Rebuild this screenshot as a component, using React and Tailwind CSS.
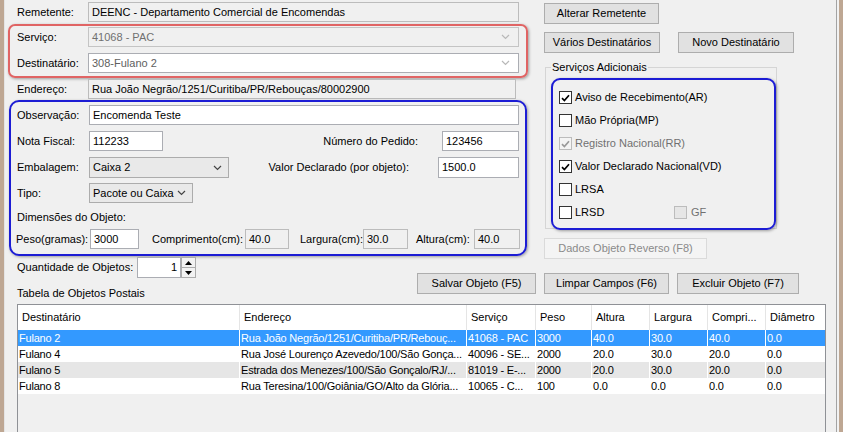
import React from 'react';

function Chevron({ color }) {
  return (
    <svg width="9" height="6" viewBox="0 0 9 6" className="shrink-0">
      <path d="M1 1 L4.5 4.5 L8 1" fill="none" stroke={color} strokeWidth="1.2" />
    </svg>
  );
}

function TextBox({ className, children, disabled, right }) {
  return (
    <div
      className={`${className} shrink-0 h-full border flex items-center px-[3px] whitespace-nowrap overflow-hidden ${
        disabled ? 'bg-[#f0f0f0] border-[#bcbcbc]' : 'bg-white border-[#abadb3]'
      } ${right ? 'justify-end' : ''}`}
    >
      {children}
    </div>
  );
}

function Combo({ className, children, variant }) {
  const styles = {
    disabled: 'bg-[#f0f0f0] border-[#c4c4c4] text-[#707070] pr-[8px]',
    editable: 'bg-white border-[#abadb3] text-[#606060] pr-[8px]',
    button: 'bg-[#e9e9e9] border-[#acacac] text-black pr-[6px]',
  };
  return (
    <div className={`${className} ${styles[variant]} shrink-0 h-full border flex items-center justify-between pl-[3px] whitespace-nowrap`}>
      <span>{children}</span>
      <Chevron color={variant === 'button' ? '#444' : '#b8b8b8'} />
    </div>
  );
}

function Btn({ className, children, disabled }) {
  return (
    <div
      className={`${className} shrink-0 h-[21px] border flex items-center justify-center whitespace-nowrap ${
        disabled ? 'bg-[#f4f4f4] border-[#dadada] text-[#8a8a8a]' : 'bg-[#e1e1e1] border-[#adadad]'
      }`}
    >
      {children}
    </div>
  );
}

function Check({ checked, disabled, dim }) {
  return (
    <div
      className={`w-[13px] h-[13px] shrink-0 border flex items-center justify-center ${
        dim ? 'border-[#bcbcbc] bg-[#e6e6e6]' : disabled ? 'border-[#bcbcbc] bg-[#f4f4f4]' : 'border-[#333333] bg-white'
      }`}
    >
      {checked && (
        <svg width="9" height="8" viewBox="0 0 9 8">
          <path d="M1 4.2 L3.4 6.6 L8 1.2" fill="none" stroke={disabled ? '#9a9a9a' : '#000'} strokeWidth="1.7" />
        </svg>
      )}
    </div>
  );
}

function CheckRow({ checked, disabled, label }) {
  return (
    <div className="h-[23px] flex items-center">
      <Check checked={checked} disabled={disabled} />
      <span className={`ml-[3px] ${disabled ? 'text-[#707070]' : ''}`}>{label}</span>
    </div>
  );
}

const colW = ['w-[222px]', 'w-[227px]', 'w-[69px]', 'w-[56px]', 'w-[58px]', 'w-[58px]', 'w-[58px]', 'w-[59px]'];
const headers = ['Destinatário', 'Endereço', 'Serviço', 'Peso', 'Altura', 'Largura', 'Compri...', 'Diâmetro'];
const rows = [
  ['Fulano 2', 'Rua João Negrão/1251/Curitiba/PR/Rebouç...', '41068 - PAC', '3000', '40.0', '30.0', '40.0', '0.0'],
  ['Fulano 4', 'Rua José Lourenço Azevedo/100/São Gonça...', '40096 - SE...', '2000', '20.0', '30.0', '20.0', '0.0'],
  ['Fulano 5', 'Estrada dos Menezes/100/São Gonçalo/RJ/...', '81019 - E-...', '2000', '20.0', '30.0', '20.0', '0.0'],
  ['Fulano 8', 'Rua Teresina/100/Goiânia/GO/Alto da Glória...', '10065 - C...', '100', '0.0', '0.0', '0.0', '0.0'],
];

export default function App() {
  return (
    <div className="w-[843px] h-[432px] flex overflow-hidden bg-[#f0f0f0] text-[11px] leading-none text-black font-['Liberation_Sans',Arial,sans-serif]">
      <div className="w-[4px] shrink-0 bg-[#bea793]" />
      <div className="w-px shrink-0 bg-[#e4e4e4]" />
      <div className="flex-1 flex flex-col min-w-0">
        {/* top section */}
        <div className="h-[256px] flex shrink-0">
          {/* left column */}
          <div className="w-[520px] ml-[3px] flex flex-col shrink-0">
            <div className="mt-[2px] h-[20px] flex items-center">
              <span className="ml-[9px] w-[71px] shrink-0">Remetente:</span>
              <TextBox className="w-[431px]" disabled>DEENC - Departamento Comercial de Encomendas</TextBox>
            </div>

            <div className="mt-[2px] w-[520px] h-[54px] shrink-0 border-2 border-[#e06464] rounded-[7px] shadow-[1px_1px_3px_rgba(0,0,0,0.35)] pt-[1px] flex flex-col gap-[6px]">
              <div className="h-[20px] flex items-center">
                <span className="ml-[7px] w-[71px] shrink-0">Serviço:</span>
                <Combo className="w-[431px]" variant="disabled">41068 - PAC</Combo>
              </div>
              <div className="h-[20px] flex items-center">
                <span className="ml-[7px] w-[71px] shrink-0">Destinatário:</span>
                <Combo className="w-[431px]" variant="editable">308-Fulano 2</Combo>
              </div>
            </div>

            <div className="mt-[1px] h-[20px] flex items-center">
              <span className="ml-[9px] w-[71px] shrink-0">Endereço:</span>
              <TextBox className="w-[428px]" disabled>Rua João Negrão/1251/Curitiba/PR/Rebouças/80002900</TextBox>
            </div>

            <div className="mt-[1px] ml-[1px] w-[518px] h-[156px] shrink-0 border-2 border-[#1c1cd4] rounded-[10px] shadow-[1px_1px_3px_rgba(0,0,0,0.35)] pt-[3px] flex flex-col">
              <div className="h-[20px] flex items-center">
                <span className="ml-[6px] w-[72px] shrink-0">Observação:</span>
                <TextBox className="w-[430px]">Encomenda Teste</TextBox>
              </div>
              <div className="mt-[6px] h-[20px] flex items-center pr-[6px]">
                <span className="ml-[6px] w-[72px] shrink-0">Nota Fiscal:</span>
                <TextBox className="w-[74px]">112233</TextBox>
                <span className="flex-1 text-right">Número do Pedido:</span>
                <TextBox className="ml-[24px] w-[77px]">123456</TextBox>
              </div>
              <div className="mt-[6px] h-[21px] flex items-center pr-[6px]">
                <span className="ml-[6px] w-[72px] shrink-0">Embalagem:</span>
                <Combo className="w-[140px]" variant="button">Caixa 2</Combo>
                <span className="flex-1 text-right">Valor Declarado (por objeto):</span>
                <TextBox className="ml-[29px] w-[81px]">1500.0</TextBox>
              </div>
              <div className="mt-[5px] h-[20px] flex items-center">
                <span className="ml-[6px] w-[72px] shrink-0">Tipo:</span>
                <Combo className="w-[104px]" variant="button">Pacote ou Caixa</Combo>
              </div>
              <div className="mt-[7px] h-[14px] flex items-center">
                <span className="ml-[6px]">Dimensões do Objeto:</span>
              </div>
              <div className="mt-[5px] h-[20px] flex items-center">
                <span className="ml-[5px] w-[74px] shrink-0 whitespace-nowrap">Peso(gramas):</span>
                <TextBox className="w-[49px]">3000</TextBox>
                <span className="ml-[13px] w-[93px] shrink-0 whitespace-nowrap">Comprimento(cm):</span>
                <TextBox className="w-[44px]" disabled>40.0</TextBox>
                <span className="ml-[11px] w-[63px] shrink-0 whitespace-nowrap">Largura(cm):</span>
                <TextBox className="w-[45px]" disabled>30.0</TextBox>
                <span className="ml-[8px] w-[58px] shrink-0 whitespace-nowrap">Altura(cm):</span>
                <TextBox className="w-[46px]" disabled>40.0</TextBox>
              </div>
            </div>
          </div>

          {/* right column */}
          <div className="ml-[16px] flex flex-col shrink-0">
            <Btn className="mt-[3px] w-[115px]">Alterar Remetente</Btn>
            <div className="mt-[8px] flex gap-[18px]">
              <Btn className="w-[116px]">Vários Destinatários</Btn>
              <Btn className="w-[116px]">Novo Destinatário</Btn>
            </div>
            <div className="relative mt-[14px] ml-[1px] w-[232px] h-[162px] shrink-0 border border-[#d5d5d5]">
              <span className="absolute left-[5px] -top-[7px] bg-[#f0f0f0] px-[1px] leading-[13px] whitespace-nowrap">Serviços Adicionais</span>
              <div className="mt-[10px] ml-[5px] w-[225px] h-[152px] border-2 border-[#1c1cd4] rounded-[9px] shadow-[1px_1px_3px_rgba(0,0,0,0.35)] pt-[6px] pl-[6px] flex flex-col">
                <CheckRow checked label="Aviso de Recebimento(AR)" />
                <CheckRow label="Mão Própria(MP)" />
                <CheckRow checked disabled label="Registro Nacional(RR)" />
                <CheckRow checked label="Valor Declarado Nacional(VD)" />
                <CheckRow label="LRSA" />
                <div className="h-[23px] flex items-center">
                  <Check />
                  <span className="ml-[3px] w-[99px] shrink-0">LRSD</span>
                  <Check dim />
                  <span className="ml-[4px] text-[#707070]">GF</span>
                </div>
              </div>
            </div>
            <Btn className="mt-[9px] w-[163px]" disabled>Dados Objeto Reverso (F8)</Btn>
          </div>
        </div>

        {/* quantity + action buttons */}
        <div className="h-[48px] flex shrink-0">
          <div className="ml-[12px] flex flex-col">
            <div className="mt-[1px] h-[21px] flex items-center">
              <span className="w-[120px] shrink-0 whitespace-nowrap">Quantidade de Objetos:</span>
              <TextBox className="w-[44px]" right>1</TextBox>
              <div className="w-[15px] h-full flex flex-col shrink-0">
                <div className="flex-1 border border-[#acacac] bg-[#f2f2f2] flex items-center justify-center">
                  <svg width="7" height="4" viewBox="0 0 7 4"><path d="M0 4 L3.5 0 L7 4 Z" fill="#000" /></svg>
                </div>
                <div className="flex-1 border border-t-0 border-[#acacac] bg-[#f2f2f2] flex items-center justify-center">
                  <svg width="7" height="4" viewBox="0 0 7 4"><path d="M0 0 L3.5 4 L7 0 Z" fill="#000" /></svg>
                </div>
              </div>
            </div>
            <div className="mt-[8px] h-[14px] flex items-center whitespace-nowrap">Tabela de Objetos Postais</div>
          </div>
          <div className="ml-auto mr-[37px] mt-[17px] flex gap-[8px]">
            <Btn className="w-[119px]">Salvar Objeto (F5)</Btn>
            <Btn className="w-[125px]">Limpar Campos (F6)</Btn>
            <Btn className="w-[122px]">Excluir Objeto (F7)</Btn>
          </div>
        </div>

        {/* table */}
        <div className="ml-[12px] w-[809px] h-[140px] shrink-0 border border-[#8f9196] bg-[#f0f0f0] flex flex-col">
          <div className="h-[25px] flex bg-white shrink-0">
            {headers.map((h, i) => (
              <div
                key={h}
                className={`${colW[i]} shrink-0 h-full flex items-center pl-[4px] whitespace-nowrap overflow-hidden ${i < 7 ? 'border-r border-[#e5e5e5]' : ''}`}
              >
                {h}
              </div>
            ))}
          </div>
          {rows.map((r, ri) => (
            <div
              key={ri}
              className={`h-[16px] flex shrink-0 ${
                ri === 0 ? 'bg-[#3399ff] text-white' : ri === 2 ? 'bg-[#e6e6e6]' : 'bg-white'
              }`}
            >
              {r.map((c, ci) => (
                <div
                  key={ci}
                  className={`${colW[ci]} shrink-0 h-full flex items-center pl-[1px] whitespace-nowrap overflow-hidden tracking-[-0.2px] ${ci < 7 ? 'border-r border-white' : ''}`}
                >
                  {c}
                </div>
              ))}
            </div>
          ))}
        </div>
      </div>
      <div className="w-px shrink-0 bg-[#a3a3a3]" />
      <div className="w-[2px] shrink-0 bg-[#f2f2f2]" />
      <div className="w-[4px] shrink-0 bg-[#bea793]" />
    </div>
  );
}
